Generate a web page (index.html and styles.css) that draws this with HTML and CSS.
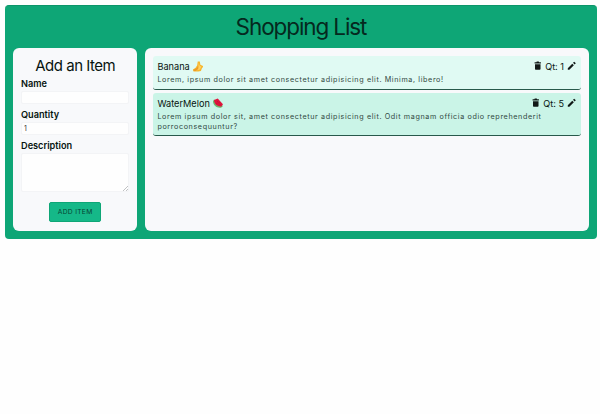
FILE: index.html
```html
<!DOCTYPE html>
<html lang="en">
<head>
<meta charset="utf-8">
<title>Shopping List</title>
<link rel="stylesheet" href="styles.css">
</head>
<body>
<svg class="defs" width="0" height="0">
  <symbol id="trash" viewBox="0 0 24 24"><path d="M5 8v12a2 2 0 0 0 2 2h10a2 2 0 0 0 2-2V8zM4 3h4.500L9.500 1.500h5l1 1.500H20V6.500H4z"/></symbol>
  <symbol id="pencil" viewBox="0 0 24 24"><path d="M2 18V22h4L17.310 10.940l-4-4zM21.710 6.540a1 1 0 0 0 0-1.410l-2.840-2.840a1 1 0 0 0-1.410 0l-2.330 2.330 4.250 4.250z"/></symbol>
</svg>
<main class="app">
  <h1 class="title">Shopping List</h1>
  <div class="columns">
    <form class="card form">
      <h2 class="form-title">Add an Item</h2>
      <label class="label" for="name">Name</label>
      <input class="field" id="name" type="text">
      <label class="label" for="qty">Quantity</label>
      <input class="field" id="qty" type="text" value="1">
      <label class="label" for="desc">Description</label>
      <div class="area-wrap">
        <textarea class="field area" id="desc"></textarea>
        <svg class="grip" viewBox="0 0 5 5"><path d="M0 5L5 0M3 5l2-2"/></svg>
      </div>
      <button class="button" type="button">ADD ITEM</button>
    </form>
    <section class="card list">
      <article class="item">
        <header class="row">
          <h3 class="name">Banana</h3>
          <svg class="emoji" viewBox="0 0 20 20"><path fill="#f6b52c" d="M9 1l4 0 1 6 6 3-3 4-2 5-5 1-9 0-1-4 5-3 3-5z"/><path fill="#ffd062" d="M11 3l1 5 4 3-3 5-7 2 4-5z"/><path fill="#ee9c28" d="M1 16l6-2 3-5 0 6-5 4-4 0z"/></svg>
          <div class="actions"><svg class="icon"><use href="#trash"/></svg><span class="qt">Qt: 1</span><svg class="icon"><use href="#pencil"/></svg></div>
        </header>
        <p class="text">Lorem, ipsum dolor sit amet consectetur adipisicing elit. Minima, libero!</p>
      </article>
      <article class="item alt">
        <header class="row">
          <h3 class="name">WaterMelon</h3>
          <svg class="emoji" viewBox="0 0 20 20"><path fill="#6bb56c" d="M0 6c0 8 8 14 16 12l3-3L2 3z"/><path fill="#e0143c" d="M9 1L2 4c0 8 7 13 14 12l3-4z"/><path fill="#a81030" d="M8 6h1v2H8zM11 8h1v2h-1zM7 10h1v2H7zM13 12h1v2h-1z"/></svg>
          <div class="actions"><svg class="icon"><use href="#trash"/></svg><span class="qt">Qt: 5</span><svg class="icon"><use href="#pencil"/></svg></div>
        </header>
        <p class="text">Lorem ipsum dolor sit, amet consectetur adipisicing elit. Odit magnam officia odio reprehenderit porroconsequuntur?</p>
      </article>
    </section>
  </div>
</main>
</body>
</html>
```
FILE: styles.css
```css
* { box-sizing: border-box; }
body { margin: 0; padding: 5px 3px 0 5px; background: #fefefe; color: #071510; font-family: Inter, "Liberation Sans", sans-serif; }
h1, h2, h3, p { margin: 0; font-weight: 400; }
.defs { display: none; }
.app { height: 234px; padding: 0 8px 8px; border-radius: 4px; background: #0ea676; border: 0 solid #0b9569; border-top-width: 1px; }
.title { height: 42px; line-height: 42px; text-align: center; font-size: 22.5px; letter-spacing: -1.1px; color: #05291e; }
.columns { display: grid; grid-template-columns: 124.4px 1fr; gap: 8px; height: 183px; }
.card { background: #f8f9fb; border-radius: 6px; padding: 8px; }
.form { display: flex; flex-direction: column; }
.form-title { height: 21px; line-height: 20px; font-size: 15px; letter-spacing: -0.5px; text-align: center; }
.label { height: 13.500px; line-height: 14px; font-size: 9.2px; font-weight: 600; }
.field { display: block; width: 108px; height: 13px; margin: 0 0 4.500px; padding: 0 2px; border: 1px solid #f3f4f6; border-radius: 2px; background: #fefefe; color: #333; font: 7px Inter, sans-serif; outline: 0; }
.area-wrap { position: relative; width: 108px; }
.area { height: 39px; margin: 0; resize: none; }
.grip { position: absolute; right: 1px; bottom: 1px; width: 5px; height: 5px; fill: none; stroke: #a5a7aa; stroke-width: .7; }
.button { align-self: center; width: 52px; height: 20px; margin-top: 10px; padding: 0; border: 1px solid #0ea676; border-radius: 2px; background: #15b888; color: #064534; font: 6.7px Inter, sans-serif; letter-spacing: .3px; }
.list { display: flex; flex-direction: column; gap: 3px; }
.item { height: 34px; padding: 4px 4px 0; border-bottom: 1px solid #28594b; border-radius: 3px; background: #e0faf3; }
.alt { height: 43px; background: #caf4e7; }
.row { display: flex; align-items: center; height: 13px; }
.name { font-size: 9.2px; }
.emoji { width: 10.500px; height: 10.500px; margin-left: 3px; }
.actions { display: flex; align-items: center; gap: 2.500px; margin: -1px 1px 0 auto; font-size: 9.1px; }
.icon { width: 9.500px; height: 9.500px; fill: #111917; }
.text { padding-top: 2px; font-size: 7.2px; line-height: 10px; letter-spacing: .62px; color: #30483f; }
```
